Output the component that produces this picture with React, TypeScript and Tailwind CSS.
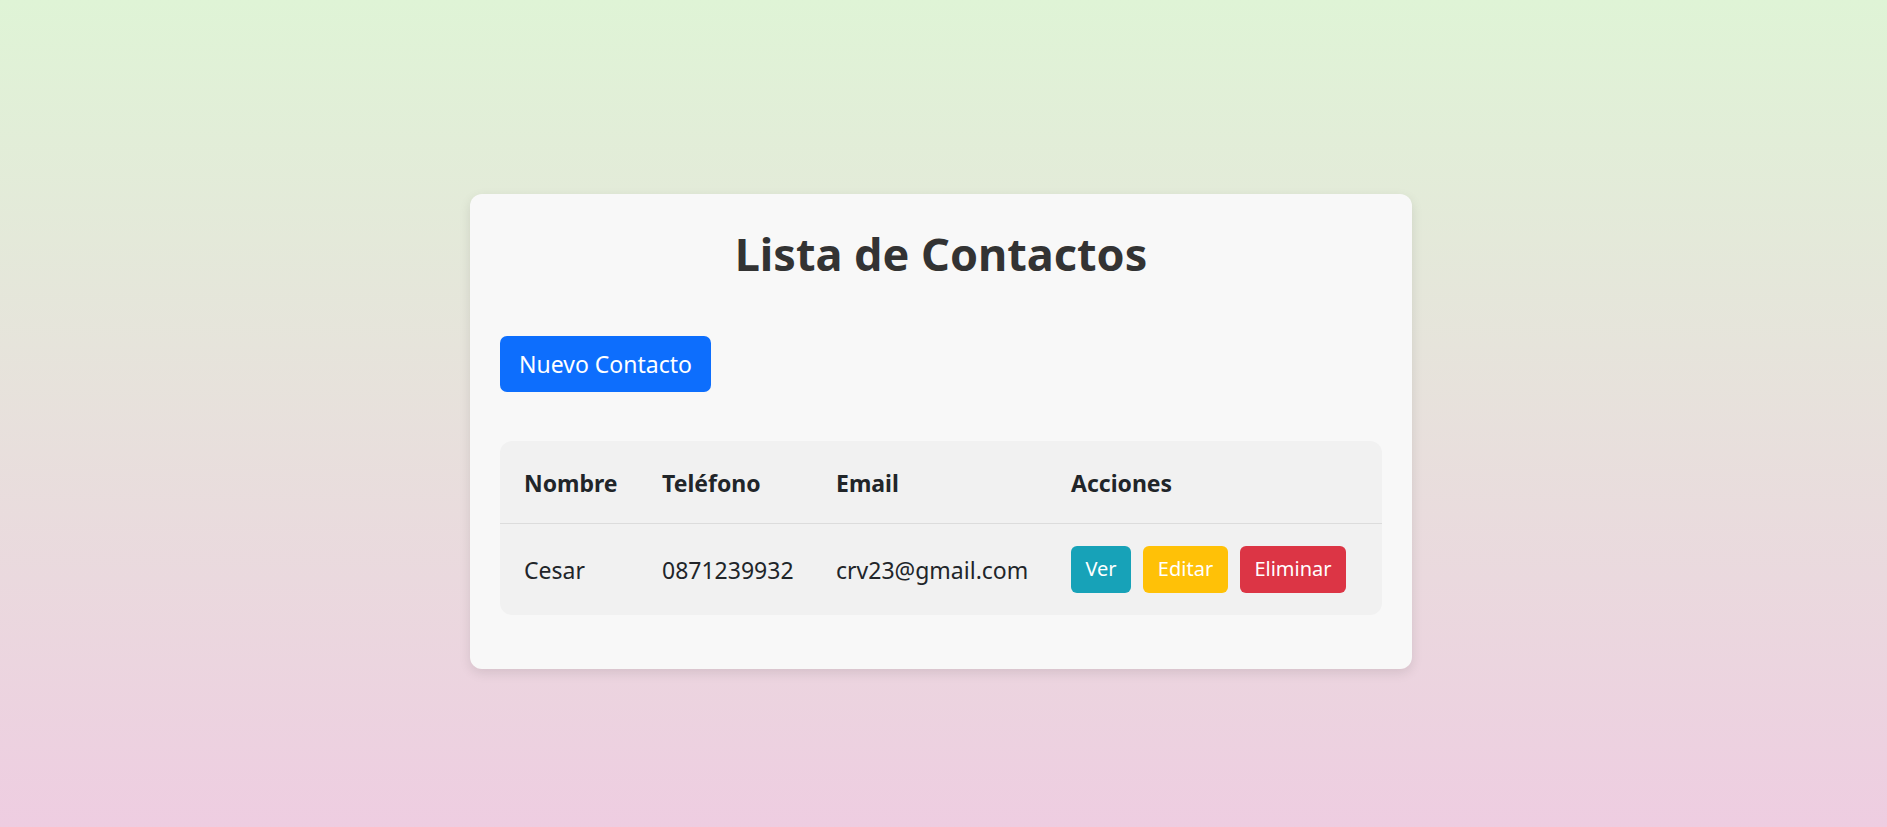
import React from 'react'

interface Contact {
  nombre: string
  telefono: string
  email: string
}

const contacts: Contact[] = [
  { nombre: 'Cesar', telefono: '0871239932', email: 'crv23@gmail.com' }
]

export default function App() {
  return (
    <div
      className="min-h-screen w-full bg-gradient-to-b from-[#dff4d6] to-[#eecde1] flex justify-center pt-[194px] pr-[5px]"
      style={{ fontFamily: '"Noto Sans", "Open Sans", sans-serif' }}
    >
      <div className="w-[942px] h-[475px] bg-[#f8f8f8] rounded-[12px] shadow-[0_4px_12px_rgba(0,0,0,0.1)] px-[30px] pt-[33px]">
        {/* Title */}
        <h1 className="text-center text-[45px] font-bold text-[#333333] leading-[1.2]">
          Lista de Contactos
        </h1>

        <button className="mt-[55px] h-[56px] px-[19px] rounded-[7px] bg-[#0d6efd] text-white text-[23px]">
          Nuevo Contacto
        </button>

        {/* Table */}
        <div className="mt-[49px] bg-[#f1f1f1] rounded-[12px] overflow-hidden">
          <table className="w-full table-fixed border-collapse text-left text-[23px] text-[#212529]">
            <colgroup>
              <col className="w-[138px]" />
              <col className="w-[174px]" />
              <col className="w-[235px]" />
              <col />
            </colgroup>
            <thead>
              <tr className="h-[82px] border-b border-[#dcdcdc]">
                <th className="pl-[24px] pt-[2px] font-bold">Nombre</th>
                <th className="pl-[24px] pt-[2px] font-bold">Teléfono</th>
                <th className="pl-[24px] pt-[2px] font-bold">Email</th>
                <th className="pl-[24px] pt-[2px] font-bold">Acciones</th>
              </tr>
            </thead>
            <tbody>
              {contacts.map((c, i) => (
                <tr key={i} className="h-[92px]">
                  <td className="pl-[24px] pt-[2px]">{c.nombre}</td>
                  <td className="pl-[24px] pt-[2px]">{c.telefono}</td>
                  <td className="pl-[24px] pt-[2px]">{c.email}</td>
                  <td className="pl-[24px]">
                    <div className="flex gap-[12px]">
                      <button className="h-[47px] w-[60px] rounded-[6px] bg-[#17a2b8] text-white text-[20px]">Ver</button>
                      <button className="h-[47px] w-[85px] rounded-[6px] bg-[#ffc107] text-white text-[20px]">Editar</button>
                      <button className="h-[47px] w-[106px] rounded-[6px] bg-[#dc3545] text-white text-[20px]">Eliminar</button>
                    </div>
                  </td>
                </tr>
              ))}
            </tbody>
          </table>
        </div>
      </div>
    </div>
  )
}
